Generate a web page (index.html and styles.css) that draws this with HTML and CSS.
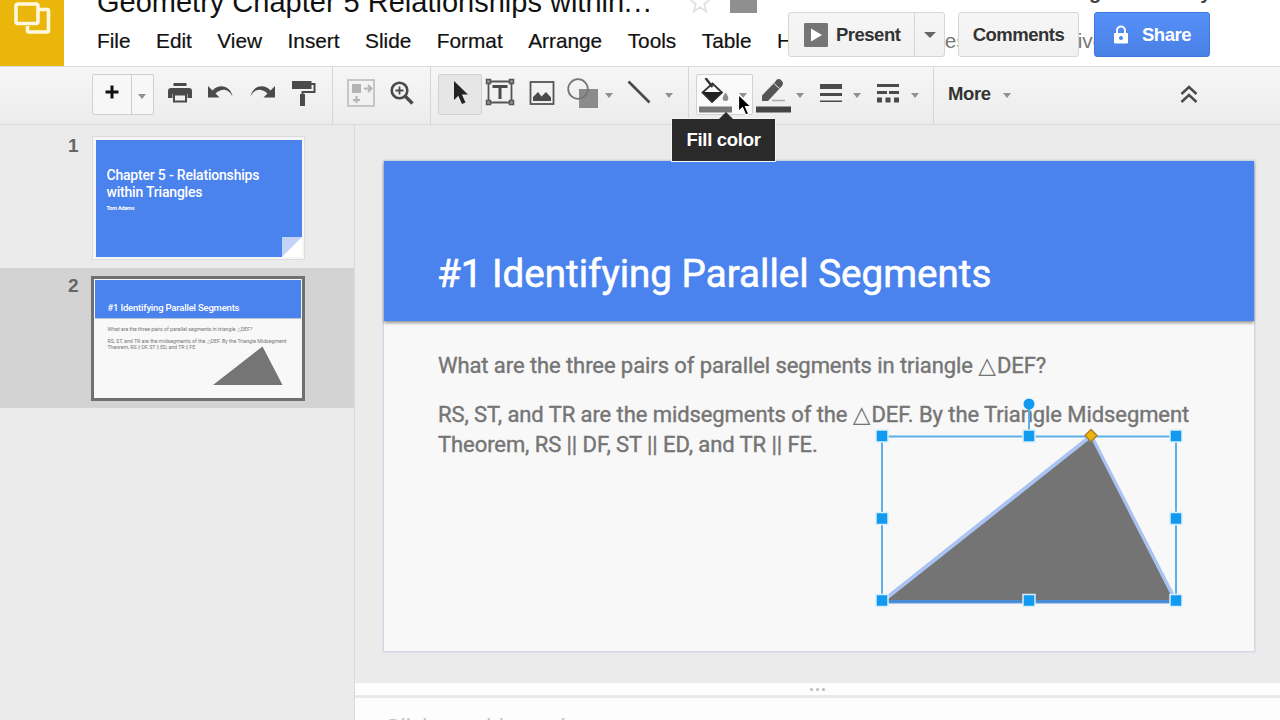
FILE: index.html
```html
<!DOCTYPE html>
<html lang="en">

<head>
  <meta charset="UTF-8" />
  <title>Geometry Chapter 5 Relationships within Triangles</title>
  <link rel="stylesheet" href="styles.css">
</head>

<body>

  <!-- HEADER -->
  <header class="header">
    <div class="logo">
      <svg width="40" height="36" viewBox="0 0 40 36">
        <path d="M27 9.500h8a1.500 1.500 0 0 1 1.500 1.500v19.500a1.500 1.500 0 0 1-1.500 1.500H17a1.500 1.500 0 0 1-1.500-1.500V26" fill="none" stroke="#fff8df" stroke-width="3.600" />
        <rect x="4" y="4" width="22" height="19.500" rx="2" fill="#eab60c" stroke="#fff8df" stroke-width="3.600" />
      </svg>
    </div>
    <div class="header-main">
      <div class="title-row">
        <h1 class="doc-title">Geometry Chapter 5 Relationships within<span class="dots">...</span></h1>
        <svg class="star" width="22" height="24" viewBox="0 0 22 24">
          <path d="M11 2l2.600 7.200 7.400.2-5.800 4.700 2 7.400-6.200-4.300-6.200 4.300 2-7.400L1 9.400l7.400-.2z" fill="none" stroke="#ddd" stroke-width="1.500" />
        </svg>
        <span class="folder"></span>
      </div>
      <nav class="menu">
        <span>File</span><span>Edit</span><span>View</span><span>Insert</span><span>Slide</span><span>Format</span><span>Arrange</span><span>Tools</span><span>Table</span><span>Help</span>
        <span class="saved">All changes saved in Drive</span>
      </nav>
    </div>
    <div class="account"><span>g</span><span>y</span></div>
    <div class="actions">
      <div class="btn present">
        <svg width="24" height="24" viewBox="0 0 24 24">
          <rect width="24" height="24" rx="1" fill="#757575" />
          <path d="M7 5.500v13L18 12z" fill="#fff" />
        </svg>
        <span class="present-label">Present</span>
        <span class="split"><i class="caret big"></i></span>
      </div>
      <div class="btn comments">Comments</div>
      <div class="btn share">
        <svg width="16" height="20" viewBox="0 0 16 20">
          <path d="M4 9V5.500a4 4 0 0 1 8 0V9" fill="none" stroke="#fff" stroke-width="2" />
          <rect x="1" y="8" width="14" height="10.500" rx="1" fill="#fff" />
          <circle cx="8" cy="13" r="2" fill="#4d87ee" />
        </svg>
        <span>Share</span>
      </div>
    </div>
  </header>

  <!-- TOOLBAR -->
  <div class="toolbar">
    <div class="group group-file">
      <div class="new-slide">
        <span class="plus">
          <svg width="14" height="14" viewBox="0 0 14 14"><path d="M7 .5v13M.5 7h13" stroke="#111" stroke-width="3" /></svg>
        </span>
        <span class="new-caret"><i class="caret"></i></span>
      </div>
      <span class="tool">
        <svg width="24" height="20" viewBox="0 0 24 20">
          <path d="M5.500 0h13v3h-13zM3 5h18a3 3 0 0 1 3 3v7h-4.500v-4h-15v4H0V8a3 3 0 0 1 3-3z" fill="#4a4a4a" />
          <path d="M6 11.500h12v7H6z" fill="none" stroke="#4a4a4a" stroke-width="2" />
        </svg>
      </span>
      <span class="tool">
        <svg class="arrow" width="26" height="14" viewBox="0 0 26 14">
          <path d="M0 1v11.500h11.500L7.500 8.500C14 2.500 21 4 24.500 11.500 22.500 1 11.500-2 4.500 5.500z" fill="#4a4a4a" />
        </svg>
      </span>
      <span class="tool">
        <svg class="arrow" width="26" height="14" viewBox="0 0 26 14">
          <path d="M26 1v11.500H14.500l4-4C12 2.500 5 4 1.500 11.500 3.500 1 14.500-2 21.500 5.500z" fill="#4a4a4a" />
        </svg>
      </span>
      <span class="tool roller">
        <svg width="24" height="27" viewBox="0 0 24 27">
          <path d="M0 1h19.500v8H0z" fill="#4a4a4a" />
          <path d="M19 4h3.500v8h-12v4" fill="none" stroke="#4a4a4a" stroke-width="2" />
          <path d="M8 14h5v12H8z" fill="#4a4a4a" />
        </svg>
      </span>
    </div>

    <div class="group group-view">
      <span class="tool">
        <svg width="28" height="28" viewBox="0 0 28 28">
          <rect x="1" y="1" width="26" height="26" fill="none" stroke="#bbb" stroke-width="1.600" />
          <path d="M5 5h9v9H5z" fill="#b3b3b3" />
          <path d="M17 9.500h7M21 6l3.500 3.500L21 13M9.500 17v7M6 21h7" fill="none" stroke="#b3b3b3" stroke-width="2" />
        </svg>
      </span>
      <span class="tool">
        <svg width="24" height="24" viewBox="0 0 24 24">
          <circle cx="9.500" cy="9.500" r="7.800" fill="none" stroke="#4a4a4a" stroke-width="2.600" />
          <path d="M15 15l7.500 7.500" stroke="#4a4a4a" stroke-width="3.400" />
          <path d="M9.500 5.500v8M5.500 9.500h8" stroke="#4a4a4a" stroke-width="1.800" />
        </svg>
      </span>
    </div>

    <div class="group group-insert">
      <span class="tool pointer">
        <svg width="16" height="26" viewBox="0 0 16 26">
          <path d="M1 1v19l4.300-4.200L9 24l3.500-1.600-3.600-7.900h6z" fill="#222" />
        </svg>
      </span>
      <span class="tool textbox">
        <svg width="30" height="28" viewBox="0 0 30 28">
          <path d="M3.500 3.500h23v21h-23z" fill="none" stroke="#555" stroke-width="1.800" />
          <path d="M1.500 1.500h4v4h-4zM24.500 1.500h4v4h-4zM1.500 22.500h4v4h-4zM24.500 22.500h4v4h-4z" fill="#999" stroke="#555" stroke-width="1.500" />
          <path d="M7.500 8.500h15M15 8.500V21" stroke="#4a4a4a" stroke-width="3" />
        </svg>
      </span>
      <span class="tool image">
        <svg width="26" height="24" viewBox="0 0 26 24">
          <rect x="1.500" y="1" width="23" height="22" fill="none" stroke="#555" stroke-width="1.800" />
          <path d="M4 20v-4l5-5 3.500 4.500L17 11l5 5.500V20z" fill="#4a4a4a" />
        </svg>
      </span>
      <span class="tool shape">
        <svg width="32" height="30" viewBox="0 0 32 30">
          <path d="M12 11h19v19H12z" fill="#8b8b8b" />
          <circle cx="11" cy="11" r="9.800" fill="none" stroke="#777" stroke-width="1.800" />
        </svg>
        <i class="caret"></i>
      </span>
      <span class="tool line">
        <svg width="24" height="24" viewBox="0 0 24 24"><path d="M1.500 1.500l21 21" stroke="#4a4a4a" stroke-width="2.600" /></svg>
        <i class="caret"></i>
      </span>
    </div>

    <div class="group group-format">
      <span class="tool fill">
        <svg width="34" height="36" viewBox="0 0 34 36">
          <path d="M14.500 5.500l9.500 9-10 9.500-9.500-9.500z" fill="#fafafa" stroke="#333" stroke-width="1.800" />
          <path d="M4.500 14h20L14.500 24z" fill="#222" />
          <path d="M7.500 0l7 9" stroke="#333" stroke-width="2.400" />
          <path d="M27.500 14.500c4 5 3.500 8.500 0 8.500s-4-3.500 0-8.500z" fill="#8d8d8d" />
          <path d="M1 28.500h33v6H1z" fill="#777" />
        </svg>
        <i class="caret"></i>
      </span>
      <span class="tool pen">
        <svg width="35" height="36" viewBox="0 0 35 36">
          <path d="M6 23v-5.500L19.500 3.500c1.500-3 4-3 6-1s2 4 0 6L12 23z" fill="#555" />
          <path d="M18 5.500l5.500 5" stroke="#eee" stroke-width="1" />
          <path d="M16 22.500h13" stroke="#aaa" stroke-width="1.500" />
          <path d="M0 28.500h35v6H0z" fill="#444" />
        </svg>
        <i class="caret"></i>
      </span>
      <span class="tool weight">
        <svg width="22" height="20" viewBox="0 0 22 20"><path d="M0 1h22v5H0zM0 10h22v3H0zM0 17.500h22v1.500H0z" fill="#4a4a4a" /></svg>
        <i class="caret"></i>
      </span>
      <span class="tool dash">
        <svg width="22" height="20" viewBox="0 0 22 20"><path d="M0 1h22v3H0zM0 8h10v3H0zM12 8h10v3H12zM0 14.500h5v5H0zM8.500 14.500h5v5h-5zM17 14.500h5v5h-5z" fill="#4a4a4a" /></svg>
        <i class="caret"></i>
      </span>
    </div>

    <div class="group group-more">
      <span class="more">More</span>
      <i class="caret"></i>
      <svg class="collapse" width="18" height="18" viewBox="0 0 18 18">
        <path d="M1.500 9L9 2l7.500 7M1.500 17L9 10l7.500 7" fill="none" stroke="#4a4a4a" stroke-width="2.400" />
      </svg>
    </div>
  </div>

  <!-- WORKSPACE -->
  <main class="workspace">
    <aside class="filmstrip">
      <div class="film-item">
        <span class="film-number">1</span>
        <div class="thumb">
          <svg width="206" height="117" viewBox="0 0 206 117">
            <rect width="206" height="117" fill="#4a82ee" />
            <text x="10.500" y="40" class="thumb-title" textLength="153">Chapter 5 - Relationships</text>
            <text x="10.500" y="57" class="thumb-title" textLength="96">within Triangles</text>
            <text x="10.500" y="70" class="thumb-author" textLength="28">Tom Adams</text>
            <path d="M186 97h20v20h-20z" fill="#c2d3f7" />
            <path d="M206 97v20h-20z" fill="#fff" />
          </svg>
        </div>
      </div>
      <div class="film-item selected">
        <span class="film-number">2</span>
        <div class="thumb">
          <svg width="206" height="117" viewBox="0 0 206 117">
            <rect width="206" height="117" fill="#f8f8f8" />
            <rect width="206" height="38" fill="#4a82ee" />
            <path d="M0 38.500h206" stroke="#b9c3d6" />
            <text x="12.500" y="30.500" class="thumb-heading" textLength="132">#1 Identifying Parallel Segments</text>
            <text x="12.500" y="51" class="thumb-body" textLength="145">What are the three pairs of parallel segments in triangle △DEF?</text>
            <text x="12.500" y="62.500" class="thumb-body" textLength="179">RS, ST, and TR are the midsegments of the △DEF. By the Triangle Midsegment</text>
            <text x="12.500" y="69" class="thumb-body" textLength="89">Theorem, RS || DF, ST || ED, and TR || FE.</text>
            <path d="M118 105L167.500 66.500l20 38.500z" fill="#757575" />
          </svg>
        </div>
      </div>
    </aside>

    <section class="editor">
      <div class="canvas">
        <div class="slide">
          <div class="slide-head">
            <h2>#1 Identifying Parallel Segments</h2>
          </div>
          <div class="slide-body">
            <p class="line1">What are the three pairs of parallel segments in triangle <span class="tri">△</span>DEF?</p>
            <p class="line2">RS, ST, and TR are the midsegments of the <span class="tri">△</span>DEF. By the Triangle Midsegment</p>
            <p class="line3">Theorem, RS || DF, ST || ED, and TR || FE.</p>
          </div>
          <!-- selected triangle with its handles -->
          <svg class="selection" width="870" height="490" viewBox="384 161 870 490">
            <path d="M881.500 602L1091 436l85 166z" fill="#757575" stroke="#a9c3f3" stroke-width="4" stroke-linejoin="round" />
            <path d="M887 600.500L1091 438.500l82.500 162z" fill="#747474" />
            <path d="M882 436.500h294v164.500H882z" fill="none" stroke="#5cb0ea" stroke-width="2" />
            <path d="M886 601.500h286" stroke="#3f86cf" stroke-width="2.500" />
            <path d="M1029 408v24" stroke="#5cb0ea" stroke-width="2" />
            <circle cx="1029" cy="404" r="5.500" fill="#129af0" />
            <g fill="#129af0" stroke="#d9effc" stroke-width="1.500">
              <rect x="876" y="430" width="12" height="12" />
              <rect x="1023" y="430" width="12" height="12" />
              <rect x="1170" y="430" width="12" height="12" />
              <rect x="876" y="512.500" width="12" height="12" />
              <rect x="1170" y="512.500" width="12" height="12" />
              <rect x="876" y="594.500" width="12" height="12" />
              <rect x="1023" y="594.500" width="12" height="12" />
              <rect x="1170" y="594.500" width="12" height="12" />
            </g>
            <path d="M1091 429.500l6 6-6 6-6-6z" fill="#efb40b" stroke="#a5852b" stroke-width="1.500" />
          </svg>
        </div>
      </div>
      <div class="splitter"><i></i><i></i><i></i></div>
      <div class="notes">Click to add speaker notes</div>
    </section>
  </main>

  <div class="tooltip">Fill color</div>
  <svg class="cursor" width="16" height="24" viewBox="0 0 16 24">
    <path d="M1.500 1.500v17l4-3.800 3.200 7.300 3-1.300-3.200-7.200h5.500z" fill="#000" stroke="#fff" stroke-width="1.200" />
  </svg>

</body>

</html>
```
FILE: styles.css
```css
* {
  box-sizing: border-box;
}

body {
  margin: 0;
  width: 1280px;
  height: 720px;
  overflow: hidden;
  position: relative;
  display: flex;
  flex-direction: column;
  background: #ebebeb;
  font-family: "Liberation Sans", Arial, sans-serif;
  color: #111;
}

svg {
  display: block;
  flex: none;
}

/* HEADER */
.header {
  position: relative;
  display: flex;
  flex: none;
  height: 66px;
  background: #fff;
}

.logo {
  width: 64px;
  padding-left: 12px;
  background: #eab60c;
}

.header-main {
  padding-left: 33px;
}

.title-row {
  display: flex;
  align-items: flex-end;
  height: 14px;
}

.doc-title {
  margin: 0;
  width: 592px;
  font-size: 29px;
  font-weight: normal;
  line-height: 24px;
  white-space: nowrap;
}

.dots {
  letter-spacing: 1.500px;
}

.folder {
  width: 27px;
  height: 22px;
  margin: 0 0 1px 19px;
  background: #8f8f8f;
}

.menu {
  display: flex;
  gap: 25.500px;
  margin-top: 13px;
  font-size: 20.800px;
  line-height: 28px;
  white-space: nowrap;
  -webkit-text-stroke: 0.2px #111;
}

.saved {
  margin-left: 14px;
  color: #777;
  -webkit-text-stroke: 0;
}

.account {
  position: absolute;
  top: -19px;
  left: 1089px;
  display: flex;
  gap: 99px;
  font-size: 20px;
  font-weight: bold;
  line-height: 22px;
  color: #444;
}

.actions {
  position: absolute;
  top: 12px;
  left: 788px;
  display: flex;
  gap: 13px;
}

.btn {
  display: flex;
  align-items: center;
  height: 45px;
  border: 1px solid #d6d6d6;
  border-radius: 3px;
  background: linear-gradient(#f6f6f6, #f1f1f1);
  font-size: 18.500px;
  font-weight: bold;
  letter-spacing: -0.500px;
  color: #333;
}

.present {
  width: 157px;
  padding-left: 15px;
}

.present-label {
  width: 78px;
  margin-left: 8px;
}

.split {
  display: flex;
  align-items: center;
  justify-content: center;
  flex: 1;
  height: 43px;
  border-left: 1px solid #d6d6d6;
}

.comments {
  width: 121px;
  justify-content: center;
}

.share {
  width: 116px;
  margin-left: 2px;
  padding-left: 18px;
  gap: 13px;
  border-color: #3f76df;
  background: linear-gradient(#5590f7, #4a80e6);
  color: #fff;
}

.caret {
  flex: none;
  width: 0;
  height: 0;
  border: 4.500px solid transparent;
  border-top: 5px solid #919191;
  border-bottom: 0;
}

.caret.big {
  border-width: 6px 6px 0;
  border-top-color: #666;
}

/* TOOLBAR */
.toolbar {
  display: flex;
  flex: none;
  height: 59px;
  border-top: 1px solid #dcdcdc;
  border-bottom: 1px solid #d8d8d8;
  background: linear-gradient(#f6f6f6, #ececec);
}

.group {
  display: flex;
  align-items: flex-start;
  padding-top: 7px;
  border-right: 1px solid #d6d6d6;
}

.group-file {
  width: 333px;
  padding-left: 92px;
}

.group-view {
  width: 98px;
  padding-left: 8px;
}

.group-insert {
  width: 258px;
  padding-left: 7px;
}

.group-format {
  width: 245px;
  padding-left: 7px;
}

.group-more {
  flex: 1;
  align-items: center;
  padding: 0 82px 4px 14px;
  border-right: 0;
}

.new-slide {
  display: flex;
  width: 62px;
  height: 41px;
  margin-right: 5px;
  border: 1px solid #cfcfcf;
  border-radius: 2px;
  background: #f7f7f7;
}

.plus {
  display: flex;
  align-items: center;
  justify-content: center;
  width: 39px;
  padding-bottom: 6px;
  padding-right: 1px;
  border-right: 1px solid #cfcfcf;
}

.new-caret {
  padding: 19px 0 0 6px;
}

.new-caret .caret {
  display: block;
}

.tool {
  display: flex;
  align-items: center;
  justify-content: center;
  width: 41px;
  height: 38px;
}

.tool .caret {
  margin-top: 4px;
}

.arrow {
  margin-bottom: 2px;
}

.roller {
  padding-left: 3px;
}

.group-view .tool {
  padding-right: 1px;
}

.pointer {
  width: 44px;
  height: 41px;
  padding-bottom: 4px;
  padding-left: 1px;
  border: 1px solid #d2d2d2;
  border-radius: 2px;
  background: #e6e6e6;
}

.textbox {
  width: 37px;
  padding-right: 1px;
  height: 36px;
}

.image {
  width: 46px;
}

.shape {
  width: 50px;
  gap: 6px;
}

.line {
  width: 58px;
  height: 36px;
  margin-left: 6px;
  gap: 14px;
}

.line .caret {
  margin-top: 6px;
}

.fill,
.pen {
  justify-content: flex-start;
  align-items: flex-start;
  height: 41px;
}

.fill {
  width: 57px;
  padding: 3px 0 0 1px;
  gap: 7px;
  border: 1px solid #d2d2d2;
  border-radius: 2px;
  background: #fafafa;
}

.pen {
  width: 58px;
  margin-left: 3px;
  padding-top: 4px;
  gap: 5px;
}

.fill .caret {
  margin-top: 15px;
}

.pen .caret {
  margin-top: 15px;
}

.weight {
  width: 58px;
  gap: 11px;
  margin-left: -3px;
}

.dash {
  width: 58px;
  gap: 12px;
}

.more {
  width: 55px;
  font-size: 18.500px;
  font-weight: bold;
  letter-spacing: -0.400px;
  color: #333;
}

.group-more .caret {
  margin-top: 3px;
}

.collapse {
  margin-left: auto;
}

/* WORKSPACE */
.workspace {
  display: flex;
  flex: 1;
  min-height: 0;
}

.filmstrip {
  width: 355px;
  padding-top: 3px;
  border-right: 1px solid #dadada;
}

.film-item {
  display: flex;
  align-items: flex-start;
  height: 140px;
  padding-top: 8px;
}

.film-item.selected {
  background: #d3d3d3;
}

.film-number {
  width: 91px;
  padding-left: 68px;
  font-size: 19px;
  font-weight: bold;
  line-height: 19px;
  color: #666;
}

.thumb {
  margin-left: 1px;
  padding: 3px 2px 2px 3px;
  border: 1px solid #dcdcdc;
  background: #f6f6f6;
}

.selected .thumb {
  margin-left: 0;
  padding: 1px;
  border: 3px solid #707070;
}

.thumb-title,
.thumb-heading,
.thumb-author,
.thumb-body {
  font-family: Roboto, sans-serif;
  fill: #fff;
}

.thumb-title {
  font-size: 14px;
  font-weight: 500;
}

.thumb-author {
  font-size: 5.500px;
  font-weight: bold;
}

.thumb-heading {
  font-size: 9.500px;
  font-weight: 500;
}

.thumb-body {
  font-size: 5.300px;
  fill: #777;
}

.editor {
  display: flex;
  flex: 1;
  flex-direction: column;
}

.canvas {
  flex: none;
  height: 558px;
  padding: 36px 0 0 29px;
}

.slide {
  position: relative;
  width: 870px;
  height: 490px;
  background: #f8f8f8;
  box-shadow: 0 0 0 1.500px #d4d8e4;
}

.slide-head {
  height: 160px;
  padding: 90px 0 0 53px;
  background: #4a82ee;
  box-shadow: 0 2px 3px rgba(0, 0, 0, 0.4);
  color: #fff;
  font-family: Roboto, sans-serif;
}

.slide-head h2 {
  margin: 0;
  font-size: 38.600px;
  font-weight: normal;
  line-height: 46px;
  white-space: nowrap;
  -webkit-text-stroke: 0.6px #fff;
}

.slide-body {
  padding: 30px 0 0 54px;
  font-family: Roboto, sans-serif;
  font-size: 22px;
  line-height: 30px;
  letter-spacing: -0.080px;
  color: #757575;
  -webkit-text-stroke: 0.4px #757575;
}

.slide-body p {
  margin: 0;
  white-space: nowrap;
}

.slide-body .line2 {
  margin-top: 19px;
}

.tri {
  font-family: "DejaVu Sans", sans-serif;
  font-size: 23px;
  line-height: 1;
  letter-spacing: 1px;
  margin-right: 0;
  -webkit-text-stroke: 0;
}

.selection {
  position: absolute;
  top: 0;
  left: 0;
}

.splitter {
  display: flex;
  flex: none;
  align-items: center;
  justify-content: center;
  gap: 3px;
  height: 15px;
  border-bottom: 3px solid #e9e9e9;
  background: #fdfdfd;
}

.splitter i {
  width: 3px;
  height: 3px;
  border-radius: 50%;
  background: #bbb;
}

.notes {
  flex: 1;
  padding: 17px 0 0 29px;
  background: #fdfdfd;
  color: #c4c4c4;
  font-size: 23px;
  line-height: 26px;
}

/* TOOLTIP AND MOUSE */
.tooltip {
  position: absolute;
  top: 119px;
  left: 672px;
  width: 103px;
  height: 42px;
  outline: 1px solid #f5f5f5;
  background: #2a2a2a;
  color: #fff;
  font-size: 18.500px;
  font-weight: bold;
  letter-spacing: -0.300px;
  line-height: 42px;
  text-align: center;
}

.tooltip::before {
  content: "";
  position: absolute;
  top: -7px;
  left: 46px;
  border: 8px solid transparent;
  border-top: 0;
  border-bottom-color: #2a2a2a;
}

.cursor {
  position: absolute;
  top: 93px;
  left: 737px;
}
```
